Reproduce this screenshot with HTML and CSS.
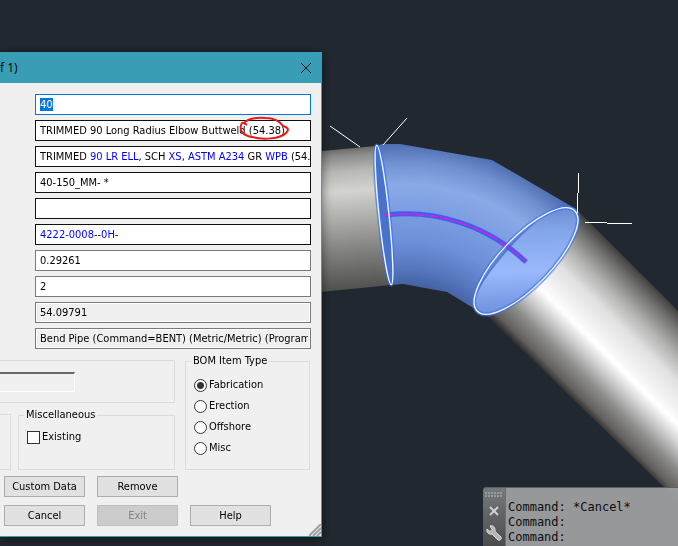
FILE: index.html
```html
<!DOCTYPE html>
<html lang="en">
<head>
<meta charset="utf-8">
<title>Component properties</title>
<link rel="stylesheet" href="styles.css">
</head>
<body>
<main class="desktop">
  <svg class="scene" viewBox="0 0 678 546" preserveAspectRatio="xMinYMin slice" role="img" aria-label="Pipe with selected elbow">
    <defs>
      <linearGradient id="pipeA" gradientUnits="userSpaceOnUse" x1="344" y1="149" x2="356" y2="290">
        <stop offset="0" stop-color="#6c6c6a"/><stop offset=".05" stop-color="#8c8c8a"/><stop offset=".16" stop-color="#b8b8b5"/>
        <stop offset=".3" stop-color="#d3d4d0"/><stop offset=".45" stop-color="#b6b7b3"/><stop offset=".7" stop-color="#858583"/>
        <stop offset="1" stop-color="#50504e"/>
      </linearGradient>
      <linearGradient id="pipeB" gradientUnits="userSpaceOnUse" x1="485" y1="312" x2="582" y2="214">
        <stop offset="0" stop-color="#353332"/><stop offset=".05" stop-color="#62605f"/><stop offset=".17" stop-color="#8b8b8a"/>
        <stop offset=".3" stop-color="#cfcfcf"/><stop offset=".4" stop-color="#ffffff"/><stop offset=".48" stop-color="#f2f2f3"/>
        <stop offset=".62" stop-color="#e0e1e0"/><stop offset=".76" stop-color="#b0b1ae"/><stop offset=".9" stop-color="#71726f"/>
        <stop offset="1" stop-color="#3c3d3c"/>
      </linearGradient>
      <radialGradient id="bend" gradientUnits="userSpaceOnUse" cx="404" cy="387" r="244">
        <stop offset=".4" stop-color="#405c9c"/><stop offset=".48" stop-color="#5475bb"/><stop offset=".6" stop-color="#6d90da"/>
        <stop offset=".74" stop-color="#7e9fe2"/><stop offset=".83" stop-color="#8aa9e6"/><stop offset=".92" stop-color="#7090d0"/>
        <stop offset="1" stop-color="#4e6db0"/>
      </radialGradient>
      <linearGradient id="mouth" gradientUnits="userSpaceOnUse" x1="478" y1="312" x2="577" y2="210">
        <stop offset="0" stop-color="#6283c8"/><stop offset=".18" stop-color="#7698e2"/><stop offset=".42" stop-color="#9ab9fc"/>
        <stop offset=".7" stop-color="#83a5ea"/><stop offset="1" stop-color="#5878bd"/>
      </linearGradient>
    </defs>
    <path d="M300 153 376 146 391 285 300 294Z" fill="url(#pipeA)"/>
    <path d="M575 208 700 333V522L484 313Z" fill="url(#pipeB)"/>
    <path d="M376 146 382 144 400 144 492 160 576 209C586 239 519 311 482 314L475 309 447 292 403 284 391 285Z" fill="url(#bend)"/>
    <ellipse cx="526" cy="261" rx="70" ry="25" transform="rotate(-46 526 261)" fill="url(#mouth)"/>
    <path d="M476 296C480 277 510 238 540 220 523 231 486 272 476 296Z" fill="#4a70c2" opacity=".8"/>
    <ellipse cx="384" cy="215" rx="5" ry="70" transform="rotate(-6 384 215)" fill="#4c72c8"/>
    <g fill="none" stroke="#3d73e8" stroke-width="4" opacity=".75">
      <ellipse cx="384" cy="215" rx="5" ry="70" transform="rotate(-6 384 215)"/>
      <ellipse cx="526" cy="261" rx="70" ry="25" transform="rotate(-46 526 261)"/>
    </g>
    <path d="M386 215A174 174 0 0 1 526 262" fill="none" stroke="#3465e6" stroke-width="5"/>
    <path d="M384 215H388A174 174 0 0 1 526 262" fill="none" stroke="#c326ee" stroke-width="2" stroke-dasharray="10 1 3 1"/>
    <g fill="none" stroke="#f2f6ff" stroke-width="1.4">
      <ellipse cx="384" cy="215" rx="5" ry="70" transform="rotate(-6 384 215)"/>
      <ellipse cx="526" cy="261" rx="70" ry="25" transform="rotate(-46 526 261)"/>
    </g>
    <path d="M330 126 360 147M407 118 383 145M578.500 173V193M577.500 193V213M585 222.500H607M607 223.500H632" fill="none" stroke="#fff"/>
  </svg>

  <form class="dialog" aria-label="Component properties">
    <header class="titlebar">
      <span>f 1)</span>
      <button class="close" type="button" aria-label="Close"><svg viewBox="0 0 12 12"><path d="M1 1 11 11M11 1 1 11"/></svg></button>
    </header>
    <div class="content">
      <div class="fields">
        <input class="field active" id="size" aria-label="Size" value="40">
        <input class="field strong" aria-label="Description" value="TRIMMED 90 Long Radius Elbow Buttweld (54.38)">
        <div class="field strong" role="textbox" contenteditable="true" aria-label="Long description">TRIMMED <b>90 LR ELL</b>, SCH <b>XS</b>, <b>ASTM A234</b> GR <b>WPB</b> (54.</div>
        <input class="field strong" aria-label="Item code" value="40-150_MM- *">
        <input class="field strong" aria-label="Tag">
        <div class="field strong" role="textbox" contenteditable="true" aria-label="Line number"><b>4222-0008</b>--<b>0H</b>-</div>
        <input class="field" aria-label="Weight" value="0.29261">
        <input class="field" aria-label="Quantity" value="2">
        <input class="field locked" aria-label="Angle" value="54.09791" readonly>
        <input class="field locked" aria-label="Source" value="Bend Pipe (Command=BENT) (Metric/Metric) (ProgramCode)" readonly>
      </div>

      <div class="groups">
        <div class="stack">
          <div class="group plain"><input class="sunken" aria-label="Status" readonly></div>
          <div class="pair">
            <div class="group stub"></div>
            <fieldset class="group">
              <legend>Miscellaneous</legend>
              <label class="option"><input type="checkbox">Existing</label>
            </fieldset>
          </div>
        </div>
        <fieldset class="group types">
          <legend>BOM Item Type</legend>
          <label class="option"><input type="radio" name="type" checked>Fabrication</label>
          <label class="option"><input type="radio" name="type">Erection</label>
          <label class="option"><input type="radio" name="type">Offshore</label>
          <label class="option"><input type="radio" name="type">Misc</label>
        </fieldset>
      </div>

      <div class="actions">
        <button type="button">Custom Data</button>
        <button type="button">Remove</button>
        <button class="new-row" type="button">Cancel</button>
        <button type="button" disabled>Exit</button>
        <button type="button">Help</button>
      </div>
    </div>
    <svg class="markup" viewBox="0 0 56 28" aria-hidden="true"><path d="M9 10C6 8 4 6 3 10 1 17 7 21 14 22 25 25 42 24 48 18 52 14 49 12 45 11 42 6 35 3 28 3 19 2 7 4 6 9"/></svg>
    <svg class="grip" viewBox="0 0 12 12" aria-hidden="true"><path d="M0 12 12 0M4 12 12 4M8 12 12 8"/></svg>
  </form>

  <section class="console" aria-label="Command line">
    <div class="handle">
      <svg class="dots" viewBox="0 0 18 5" aria-hidden="true"><path d="M0 1H18M0 4H18"/></svg>
      <button type="button" aria-label="Close"><svg class="cross" viewBox="0 0 12 12"><path d="M2 2 10 10M10 2 2 10"/></svg></button>
      <button type="button" aria-label="Customize"><svg class="wrench" viewBox="0 0 16 16"><path d="M1 4 4 6.500 6 4.500 4 1C7 0 9 2 9 5L9 6.500 15 12C16 14 14 16 12 15L6 9C3 10 0 7 1 4Z"/></svg></button>
    </div>
    <div class="log">
      <div>Command: *Cancel*</div>
      <div>Command:</div>
      <div class="prompt"><label for="command">Command:</label><input id="command"></div>
    </div>
  </section>
</main>
<script src="script.js"></script>
</body>
</html>
```
FILE: styles.css
```css
* { box-sizing: border-box; }

body {
  margin: 0;
  background: #222830;
  color: #000;
  font: 11px/14px "DejaVu Sans Condensed", "DejaVu Sans", sans-serif;
}

button, input { font: inherit; color: inherit; }

.desktop {
  position: relative;
  min-height: 100vh;
  overflow: hidden;
}

.scene {
  position: absolute;
  inset: 0;
  width: 100%;
  height: 100%;
}

.dialog {
  position: absolute;
  left: 0;
  top: 52px;
  width: 322px;
  background: #f0f0f0;
  border: solid #3a9fb6;
  border-width: 0 1px 1px 0;
  box-shadow: 0 2px 10px rgba(0, 0, 0, .5);
}

.titlebar {
  display: flex;
  align-items: center;
  justify-content: space-between;
  height: 31px;
  padding: 0 7px 0 0;
  background: #389db5;
  font: 12px/16px "Open Sans", sans-serif;
}

.close {
  display: flex;
  padding: 2px;
  border: 0;
  background: none;
}

.close svg {
  width: 12px;
  height: 12px;
  fill: none;
  stroke: #111;
}

.content { padding: 11px 10px 10px 0; }

.fields {
  display: grid;
  gap: 5px;
  padding-left: 35px;
}

.field {
  width: 100%;
  height: 21px;
  padding: 0 2px 0 4px;
  border: 1px solid #7a7a7a;
  border-radius: 0;
  outline: 0;
  background: #fff;
  line-height: 19px;
  white-space: nowrap;
  overflow: hidden;
}

.field b { font-weight: normal; color: #00f; }
.strong { border-color: #111; }
.active { border-color: #0078d7; }
.active::selection { background: #0078d7; color: #fff; }

.locked {
  background: #f0f0f0;
  box-shadow: inset 0 0 0 1px #fff;
}

.groups {
  display: grid;
  grid-template-columns: 1fr 125px;
  gap: 10px;
  margin: 5px 1px 0 0;
}

.stack {
  display: flex;
  flex-direction: column;
  gap: 5px;
}

.group {
  min-width: 0;
  margin: 0;
  padding: 0 8px;
  border: 1px solid #dcdcdc;
}

.group legend {
  margin-left: -3px;
  padding: 0 2px;
}

.plain {
  height: 43px;
  margin-top: 6px;
  padding: 11px 99px 0 0;
  border-left: 0;
}

.sunken {
  display: block;
  width: 100%;
  height: 20px;
  border: solid #fff;
  border-width: 2px 1px 1px 0;
  border-top-color: #696969;
  background: #f0f0f0;
}

.pair {
  display: grid;
  grid-template-columns: 11px 1fr;
  gap: 7px;
  height: 62px;
}

.stub {
  margin-top: 6px;
  padding: 0;
  border-left: 0;
}

.option {
  display: flex;
  align-items: center;
  gap: 2px;
  height: 14px;
}

.pair .option { margin-top: 8px; }

.types .option { margin-top: 7px; }
.types legend + .option { margin-top: 10px; }

.option input {
  appearance: none;
  width: 13px;
  height: 13px;
  margin: 0;
  border: 1px solid #333;
  background: #fff;
}

.option input[type="radio"] { border-radius: 50%; }

.option input:checked {
  background: radial-gradient(circle, #333 3px, #fff 4px);
}

.actions {
  display: grid;
  grid-template-columns: repeat(3, 81px);
  gap: 8px 12px;
  margin-top: 6px;
  padding-left: 4px;
}

.actions button {
  height: 21px;
  padding: 0;
  border: 1px solid #adadad;
  background: #e1e1e1;
}

.actions .new-row { grid-column: 1; }

.actions button:disabled {
  border-color: #bfbfbf;
  background: #ccc;
  color: #838383;
}

.markup {
  position: absolute;
  left: 238px;
  top: 63px;
  width: 56px;
  height: 28px;
  fill: none;
  stroke: #f01818;
  stroke-width: 2;
  pointer-events: none;
}

.grip {
  position: absolute;
  right: 0;
  bottom: 0;
  width: 12px;
  height: 12px;
  stroke: #a0a0a0;
  stroke-width: 2;
}

.console {
  position: absolute;
  left: 483px;
  right: 0;
  bottom: 0;
  display: flex;
  height: 59px;
  border-top: 1px solid #5c6063;
  border-top-left-radius: 3px;
  overflow: hidden;
  font: 12px/15px "DejaVu Sans Mono", monospace;
}

.handle {
  display: flex;
  flex: none;
  flex-direction: column;
  align-items: center;
  gap: 8px;
  width: 23px;
  padding-top: 4px;
  border-right: 1px solid #6d6f70;
  background: linear-gradient(#767b7b, #4a4b4c);
}

.handle button {
  display: flex;
  padding: 0;
  border: 0;
  background: none;
}

.dots {
  width: 18px;
  height: 5px;
  stroke: #989b9b;
  stroke-width: 2;
  stroke-dasharray: 2 1;
}

.cross {
  width: 12px;
  height: 12px;
  stroke: #d0d0d0;
  stroke-width: 2;
}

.wrench {
  width: 16px;
  height: 16px;
  fill: #b4b4b4;
  stroke: #dedede;
}

.log {
  flex: 1;
  min-width: 0;
  padding: 12px 0 0 2px;
  background: rgba(157, 158, 160, .95);
  color: #0c0e10;
}

.prompt { display: flex; }

.prompt input {
  flex: 1;
  min-width: 0;
  height: 15px;
  padding: 0;
  border: 0;
  outline: 0;
  background: none;
}
```
FILE: script.js
```js
const size = document.getElementById("size");
size.focus();
size.select();
```
